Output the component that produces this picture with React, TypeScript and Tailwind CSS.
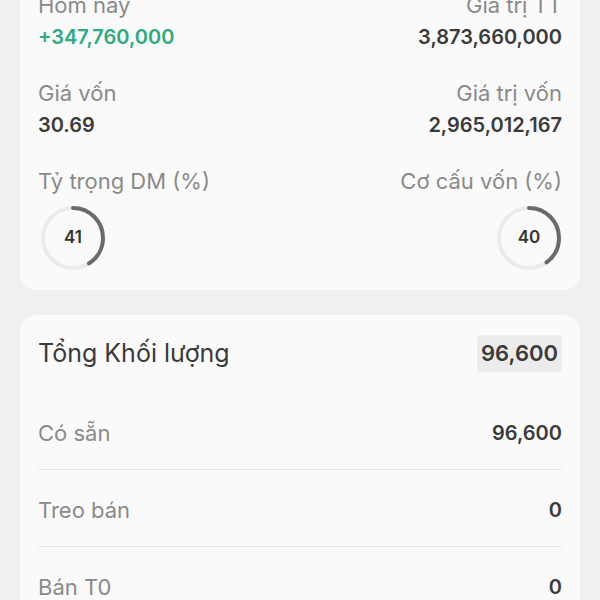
import React from "react";

const font = { fontFamily: "Inter, 'Noto Sans', sans-serif" };

function Ring({ value }: { value: number }) {
  const r = 30;
  const c = 2 * Math.PI * r;
  return (
    <div className="relative w-[66px] h-[66px]">
      <svg width="66" height="66" viewBox="0 0 66 66" className="-rotate-90">
        <circle cx="33" cy="33" r={r} fill="none" stroke="#ebebeb" strokeWidth="4" />
        <circle
          cx="33"
          cy="33"
          r={r}
          fill="none"
          stroke="#6b6b6b"
          strokeWidth="4"
          strokeLinecap="round"
          strokeDasharray={`${(c * value) / 100} ${c}`}
        />
      </svg>
      <div className="absolute inset-0 flex items-center justify-center text-[17px] font-semibold text-[#333]">
        {value}
      </div>
    </div>
  );
}

function Stat({ label, value, right, green }: { label: string; value: string; right?: boolean; green?: boolean }) {
  return (
    <div className={`flex flex-col gap-1 ${right ? "items-end" : "items-start"}`}>
      <span className="text-[22px] leading-7 text-[#8a8a8a]">{label}</span>
      <span className={`text-xl leading-7 font-semibold ${green ? "text-[#2eaa7e]" : "text-[#3a3a3a]"}`}>
        {value}
      </span>
    </div>
  );
}

const rows = [
  { label: "Có sẵn", value: "96,600" },
  { label: "Treo bán", value: "0" },
  { label: "Bán T0", value: "0" },
];

export default function App() {
  return (
    <div className="w-[600px] h-[600px] overflow-hidden bg-[#f0f0f0] px-5" style={font}>
      {/* Summary card */}
      <div className="-mt-[20px] bg-[#fafafa] rounded-b-2xl px-[18px] pt-[11px] pb-[19px]">
        <div className="flex justify-between">
          <Stat label="Hôm nay" value="+347,760,000" green />
          <Stat label="Giá trị TT" value="3,873,660,000" right />
        </div>
        <div className="flex justify-between mt-7">
          <Stat label="Giá vốn" value="30.69" />
          <Stat label="Giá trị vốn" value="2,965,012,167" right />
        </div>
        <div className="flex justify-between mt-7">
          <div className="flex flex-col items-start gap-[10px]">
            <span className="text-[22px] leading-7 text-[#8a8a8a]">Tỷ trọng DM (%)</span>
            <div className="ml-[2px]">
              <Ring value={41} />
            </div>
          </div>
          <div className="flex flex-col items-end gap-[10px]">
            <span className="text-[22px] leading-7 text-[#8a8a8a]">Cơ cấu vốn (%)</span>
            <Ring value={40} />
          </div>
        </div>
      </div>

      {/* Volume card */}
      <div className="mt-[25px] bg-[#fafafa] rounded-2xl px-[18px] pt-[20px]">
        <div className="flex items-center justify-between mb-5">
          <span className="text-[25px] text-[#3a3a3a]">Tổng Khối lượng</span>
          <span className="h-[37px] flex items-center bg-[#ececec] rounded px-[4px] text-[22px] font-semibold text-[#3a3a3a]">
            96,600
          </span>
        </div>
        {rows.map((row) => (
          <div
            key={row.label}
            className="flex items-center justify-between pt-[26px] pb-[22px] border-b border-[#e6e6e6]"
          >
            <span className="text-[22px] leading-7 text-[#8a8a8a]">{row.label}</span>
            <span className="text-xl leading-7 font-semibold text-[#3a3a3a]">{row.value}</span>
          </div>
        ))}
      </div>
    </div>
  );
}
